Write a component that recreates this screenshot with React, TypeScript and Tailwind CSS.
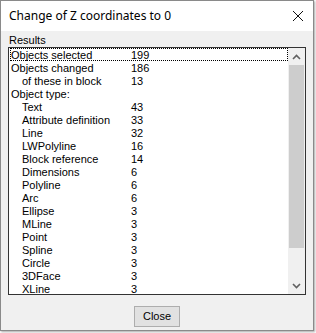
import React from "react";

const rows: [string, string, boolean][] = [
  ["Objects selected", "199", false],
  ["Objects changed", "186", false],
  ["of these in block", "13", true],
  ["Object type:", "", false],
  ["Text", "43", true],
  ["Attribute definition", "33", true],
  ["Line", "32", true],
  ["LWPolyline", "16", true],
  ["Block reference", "14", true],
  ["Dimensions", "6", true],
  ["Polyline", "6", true],
  ["Arc", "6", true],
  ["Ellipse", "3", true],
  ["MLine", "3", true],
  ["Point", "3", true],
  ["Spline", "3", true],
  ["Circle", "3", true],
  ["3DFace", "3", true],
  ["XLine", "3", true],
];

function Chevron({ up }: { up?: boolean }) {
  return (
    <svg width="9" height="6" viewBox="0 0 9 6" className={up ? "" : "rotate-180"}>
      <path d="M1 5 L4.5 1.5 L8 5" fill="none" stroke="#606060" strokeWidth="1.6" />
    </svg>
  );
}

export default function App() {
  return (
    <div className="w-[316px] h-[333px] bg-white">
      <div className="w-[314px] h-[331px] border border-[#8a8a8a] flex flex-col shadow-[1px_1px_2px_rgba(0,0,0,0.35)]">
        <div className="h-[30px] bg-white flex items-center justify-between pl-[8px] pr-[8px] shrink-0">
          <span className="text-[12px] text-black font-['Noto_Sans',sans-serif]">
            Change of Z coordinates to 0
          </span>
          <svg width="12" height="12" viewBox="0 0 12 12" className="mr-[1px]">
            <path d="M1 1 L11 11 M11 1 L1 11" stroke="#111" strokeWidth="1" />
          </svg>
        </div>
        <div className="flex-1 bg-[#f0f0f0] px-[7px] pt-[3px] flex flex-col font-['Liberation_Sans',sans-serif] text-[11px] text-black">
          <div className="leading-[13px] pl-[1px]">Results</div>
          <div className="h-[248px] border border-[#333] bg-white flex">
            <div className="flex-1 pt-[0px] pl-[1px]">
              {rows.map(([label, value, indent], i) => (
                <div
                  key={i}
                  className={
                    "h-[13px] leading-[13px] flex " +
                    (i === 0 ? "border border-dotted border-black -mx-[0px]" : "border border-transparent")
                  }
                >
                  <span className={"w-[120px] " + (indent ? "pl-[11px]" : "")}>{label}</span>
                  <span>{value}</span>
                </div>
              ))}
            </div>
            <div className="w-[17px] bg-[#f0f0f0] flex flex-col items-center">
              <div className="h-[17px] flex items-center justify-center">
                <Chevron up />
              </div>
              <div className="w-[15px] h-[183px] bg-[#cdcdcd]"></div>
              <div className="flex-1"></div>
              <div className="h-[17px] flex items-center justify-center">
                <Chevron />
              </div>
            </div>
          </div>
          <div className="flex justify-center pt-[11px]">
            <button className="w-[46px] h-[21px] border border-[#adadad] bg-[#e1e1e1] text-[11px] leading-[19px]">
              Close
            </button>
          </div>
        </div>
      </div>
    </div>
  );
}
